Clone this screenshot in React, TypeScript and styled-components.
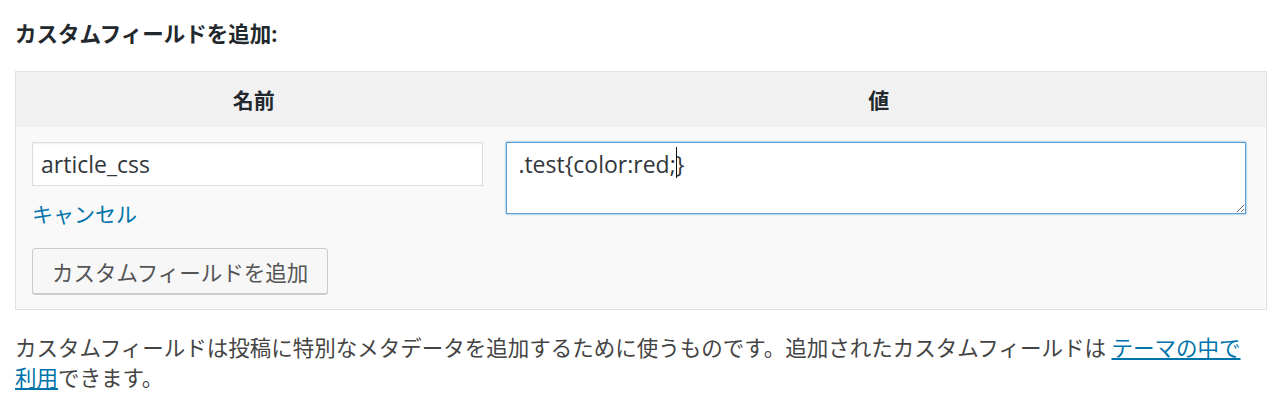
import React, { useEffect, useState } from 'react';
import styled, { createGlobalStyle } from 'styled-components';

const GlobalStyle = createGlobalStyle`
  body {
    margin: 0;
    background: #fff;
    font-family: "Open Sans", "Noto Sans CJK JP", sans-serif;
    color: #444;
  }
`;

const Page = styled.div`
  padding: 19px 13px 0 15px;
`;

const Title = styled.h4`
  margin: 0 0 23px;
  font-size: 21.5px;
  line-height: 29px;
  font-weight: 700;
  color: #23282d;
`;

const MetaTable = styled.table`
  width: 100%;
  table-layout: fixed;
  border-collapse: collapse;
  border: 1px solid #e1e1e1;
  background: #f9f9f9;
`;

const HeadCell = styled.th<{ $width?: string }>`
  width: ${({ $width }) => $width || 'auto'};
  background: #f1f1f1;
  padding: 13px 0 12px;
  font-size: 21px;
  line-height: 30px;
  font-weight: 700;
  color: #23282d;
  text-align: center;
`;

const Cell = styled.td<{ $pad: string }>`
  vertical-align: top;
  padding: ${({ $pad }) => $pad};
`;

const NameInput = styled.input`
  display: block;
  box-sizing: border-box;
  width: 100%;
  height: 44px;
  margin: 0;
  padding: 0 8px;
  border: 1px solid #ddd;
  box-shadow: inset 0 1px 2px rgba(0, 0, 0, 0.07);
  background: #fff;
  font-family: inherit;
  font-size: 23px;
  color: #32373c;
  outline: none;
`;

const ValueWrap = styled.div`
  position: relative;
`;

const ValueArea = styled.textarea`
  display: block;
  box-sizing: border-box;
  width: 100%;
  height: 72px;
  margin: 0;
  padding: 6px 11px;
  border: 1px solid #5b9dd9;
  box-shadow: 0 0 2px rgba(30, 140, 190, 0.8);
  background: #fff;
  font-family: inherit;
  font-size: 23px;
  line-height: 30px;
  color: #32373c;
  outline: none;
  resize: vertical;
`;

// text cursor drawn over the textarea
const Caret = styled.span`
  position: absolute;
  top: 5px;
  width: 1px;
  height: 31px;
  background: #111;
`;

const CancelLink = styled.a`
  display: inline-block;
  margin-top: 13px;
  font-size: 21px;
  line-height: 30px;
  color: #0073aa;
  text-decoration: none;
`;

const AddButton = styled.button`
  display: block;
  box-sizing: border-box;
  height: 46px;
  margin-top: 19px;
  padding: 0 19px;
  border: 1px solid #ccc;
  border-radius: 3px;
  background: #f7f7f7;
  box-shadow: 0 1px 0 #ccc;
  font-family: inherit;
  font-size: 21.5px;
  color: #555;
  cursor: pointer;
`;

const Description = styled.p`
  max-width: 1235px;
  margin: 23px 0 0;
  font-size: 21.5px;
  line-height: 30px;
  color: #444;
`;

const TextLink = styled.a`
  color: #0073aa;
  text-decoration: underline;
`;

const VALUE = '.test{color:red;}';

export default function App() {
  const [caretLeft, setCaretLeft] = useState(172);

  useEffect(() => {
    const measure = () => {
      const ctx = document.createElement('canvas').getContext('2d');
      if (!ctx) return;
      ctx.font = '23px "Open Sans"';
      setCaretLeft(12 + ctx.measureText(VALUE.slice(0, 16)).width);
    };
    document.fonts.ready.then(measure);
  }, []);

  return (
    <>
      <GlobalStyle />
      <Page>
        <Title>カスタムフィールドを追加:</Title>
        <MetaTable>
          <thead>
            <tr>
              <HeadCell $width="38%">名前</HeadCell>
              <HeadCell>値</HeadCell>
            </tr>
          </thead>
          <tbody>
            <tr>
              <Cell $pad="15px 8px 15px 16px">
                <NameInput defaultValue="article_css" />
                <CancelLink href="#">キャンセル</CancelLink>
                <AddButton>カスタムフィールドを追加</AddButton>
              </Cell>
              <Cell $pad="15px 20px 0 15px">
                <ValueWrap>
                  <ValueArea defaultValue={VALUE} />
                  <Caret style={{ left: caretLeft }} />
                </ValueWrap>
              </Cell>
            </tr>
          </tbody>
        </MetaTable>
        <Description>
          カスタムフィールドは投稿に特別なメタデータを追加するために使うものです。追加されたカスタムフィールドは{' '}
          <TextLink href="#">テーマの中で利用</TextLink>できます。
        </Description>
      </Page>
    </>
  );
}
